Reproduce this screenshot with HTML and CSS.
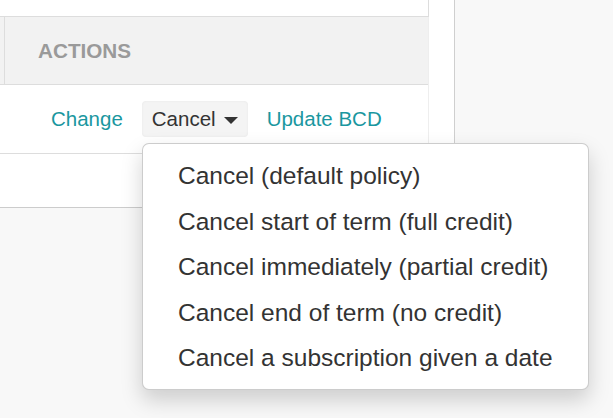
FILE: index.html
```html
<!DOCTYPE html>
<html>
<head>
<meta charset="utf-8">
<link rel="stylesheet" href="styles.css">
</head>
<body>
<div class="page">
  <div class="panel">
    <div class="table">
      <div class="top"></div>
      <div class="thead">
        <div class="th-stub"></div>
        <div class="th">ACTIONS</div>
      </div>
      <div class="row">
        <a class="link">Change</a>
        <span class="btn">Cancel<span class="caret"></span></span>
        <a class="link">Update BCD</a>
      </div>
      <div class="row2"></div>
    </div>
  </div>
  <ul class="dropdown">
    <li>Cancel (default policy)</li>
    <li>Cancel start of term (full credit)</li>
    <li>Cancel immediately (partial credit)</li>
    <li>Cancel end of term (no credit)</li>
    <li>Cancel a subscription given a date</li>
  </ul>
</div>
</body>
</html>
```

FILE: styles.css
```css
html, body {
  margin: 0;
  padding: 0;
  background: #f8f8f8;
  font-family: "Liberation Sans", Arial, sans-serif;
  color: #333;
}
.page {
  position: relative;
  width: 613px;
  height: 418px;
  overflow: hidden;
}
.panel {
  width: 454px;
  background: #fff;
  border-right: 1px solid #cfcfcf;
}
.table {
  width: 428px;
  border-right: 1px solid #eeeeee;
}
.top {
  height: 16px;
  border-bottom: 1px solid #dddddd;
  border-right: 1px solid #dddddd;
  margin-right: -1px;
}
.thead {
  display: flex;
  height: 67px;
  background: #f2f2f2;
  border-bottom: 1px solid #dddddd;
}
.th-stub {
  width: 4px;
  border-right: 1px solid #dddddd;
}
.th {
  padding-left: 33px;
  line-height: 67px;
  font-size: 20.7px;
  font-weight: bold;
  color: #9a9a9a;
}
.row {
  display: flex;
  align-items: center;
  gap: 19px;
  height: 68px;
  padding-left: 51px;
  border-bottom: 1px solid #dddddd;
  font-size: 20.5px;
}
.link {
  color: #1a97a0;
}
.btn {
  display: inline-flex;
  align-items: center;
  height: 36px;
  padding: 0 10px;
  background: #f4f4f4;
  border-radius: 4px;
  box-shadow: inset 0 0 3px rgba(0,0,0,0.05);
  color: #333;
}
.caret {
  display: inline-block;
  margin-left: 8px;
  margin-top: 2px;
  width: 0;
  height: 0;
  border-left: 7px solid transparent;
  border-right: 7px solid transparent;
  border-top: 7px solid #333;
}
.row2 {
  height: 53px;
  border-bottom: 1px solid #cccccc;
}
.dropdown {
  position: absolute;
  left: 142px;
  top: 143px;
  margin: 0;
  padding: 8.75px 0;
  list-style: none;
  background: #fff;
  border: 1px solid rgba(0,0,0,0.2);
  border-radius: 7px;
  box-shadow: 0 10px 21px rgba(0,0,0,0.175);
  white-space: nowrap;
}
.dropdown li {
  padding: 5.25px 35px;
  line-height: 35px;
  font-size: 24.5px;
  color: #333;
}
```
